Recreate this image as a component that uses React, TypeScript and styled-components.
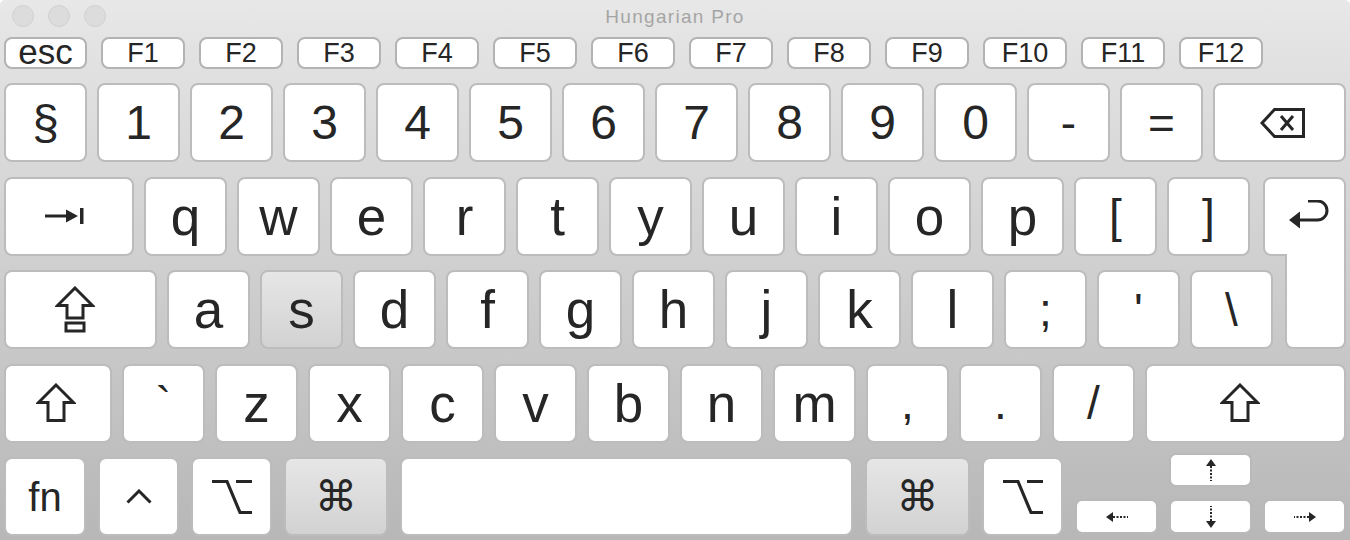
import styled, { createGlobalStyle } from "styled-components";

const INK = "#262626";
const EDGE = "#bcbcbc";

const GlobalStyle = createGlobalStyle`
  html, body {
    margin: 0;
    padding: 0;
    background: #ffffff;
  }
  body {
    font-family: "Liberation Sans", Arial, sans-serif;
  }
`;

const fnKeys = ["F1", "F2", "F3", "F4", "F5", "F6", "F7", "F8", "F9", "F10", "F11", "F12"];
const numberRow = ["1", "2", "3", "4", "5", "6", "7", "8", "9", "0", "-", "="];
const topRow = ["q", "w", "e", "r", "t", "y", "u", "i", "o", "p", "[", "]"];
const homeRow = ["a", "s", "d", "f", "g", "h", "j", "k", "l", ";", "'", "\\"];
const bottomRow = ["`", "z", "x", "c", "v", "b", "n", "m", ",", ".", "/"];

// letters render a bit larger than digits and symbols in the viewer
const labelSize = (c: string) => {
  if (/[a-z]/.test(c)) return 53;
  if (/[0-9§]/.test(c)) return 48;
  return 46;
};

const BackspaceIcon = () => (
  <svg width="46" height="32" viewBox="0 0 46 32" fill="none" stroke={INK} strokeWidth="3">
    <path d="M2 16 L14.5 2.5 H43.5 V29.5 H14.5 Z" />
    <path d="M21 9 L33 23 M33 9 L21 23" />
  </svg>
);

const TabIcon = () => (
  <svg width="40" height="18" viewBox="0 0 40 18">
    <path d="M0 9 H24" stroke={INK} strokeWidth="3" />
    <polygon points="21,2.5 33,9 21,15.5" fill={INK} />
    <rect x="35" y="1" width="3.5" height="16" fill={INK} />
  </svg>
);

const ReturnIcon = () => (
  <svg width="40" height="32" viewBox="0 0 40 32">
    <path d="M9 20 H28.5 A9.5 9.5 0 0 0 28.5 1 H19" fill="none" stroke={INK} strokeWidth="3" />
    <polygon points="0,20 11,11.5 11,28.5" fill={INK} />
  </svg>
);

const CapsIcon = () => (
  <svg width="40" height="48" viewBox="0 0 40 48" fill="none" stroke={INK} strokeWidth="3">
    <path d="M20 2 L37.5 19.5 H28 V32 H12 V19.5 H2.5 Z" />
    <rect x="11" y="37" width="18" height="8" />
  </svg>
);

const ShiftIcon = () => (
  <svg width="40" height="40" viewBox="0 0 40 40" fill="none" stroke={INK} strokeWidth="3">
    <path d="M20 2 L37.5 19.5 H28 V37.5 H12 V19.5 H2.5 Z" />
  </svg>
);

const ControlIcon = () => (
  <svg width="26" height="15" viewBox="0 0 26 15" fill="none" stroke={INK} strokeWidth="3">
    <polyline points="1.5,13.5 13,2 24.5,13.5" />
  </svg>
);

const OptionIcon = () => (
  <svg width="40" height="36" viewBox="0 0 40 36" fill="none" stroke={INK} strokeWidth="3.2">
    <path d="M0 2.5 H15 L28 33.5 H40 M24 2.5 H40" />
  </svg>
);

type Dir = "up" | "down" | "left" | "right";

const ArrowIcon = ({ dir }: { dir: Dir }) => {
  const turn = { up: 0, right: 90, down: 180, left: 270 }[dir];
  const vertical = dir === "up" || dir === "down";
  return (
    <svg
      width={vertical ? 12 : 24}
      height={vertical ? 24 : 12}
      viewBox={vertical ? "0 0 12 24" : "-6 6 24 12"}
    >
      <g transform={`rotate(${turn} 6 12)`}>
        <polygon points="6,1 1,8 11,8" fill={INK} />
        <path d="M6 8 V23" stroke={INK} strokeWidth="2" strokeDasharray="2 1.5" />
      </g>
    </svg>
  );
};

const App = () => {
  return (
    <>
      <GlobalStyle />
      <Window>
        <TitleBar>
          <Lights>
            <Light />
            <Light />
            <Light />
          </Lights>
          <Title>Hungarian Pro</Title>
        </TitleBar>

        <FnRow>
          <FnKey $w={83} $fs={35} $lift={4}>esc</FnKey>
          {fnKeys.map((k) => (
            <FnKey key={k}>{k}</FnKey>
          ))}
        </FnRow>

        <Board>
          <Row>
            <Key $fs={48}>§</Key>
            {numberRow.map((k) => (
              <Key key={k} $fs={labelSize(k)}>{k}</Key>
            ))}
            <Key $grow $shift={6}>
              <BackspaceIcon />
            </Key>
          </Row>

          <Row>
            <Key $w={130} $shift={-8}>
              <TabIcon />
            </Key>
            {topRow.map((k) => (
              <Key key={k} $fs={labelSize(k)}>{k}</Key>
            ))}
            <ReturnTop>
              <ReturnIcon />
            </ReturnTop>
          </Row>

          <Row>
            <Key $w={153} $shift={-12}>
              <CapsIcon />
            </Key>
            {homeRow.map((k) => (
              <Key key={k} $fs={labelSize(k)} $pressed={k === "s"}>{k}</Key>
            ))}
            <ReturnFoot />
          </Row>

          <Row>
            <Key $w={108} $shift={-4}>
              <ShiftIcon />
            </Key>
            {bottomRow.map((k) => (
              <Key key={k} $fs={labelSize(k)}>{k}</Key>
            ))}
            <Key $grow $shift={-12}>
              <ShiftIcon />
            </Key>
          </Row>

          <Row $gap={12}>
            <Key $w={82} $fs={40}>fn</Key>
            <Key $w={81}>
              <ControlIcon />
            </Key>
            <Key $w={81}>
              <OptionIcon />
            </Key>
            <Key $w={104} $pressed>
              <CommandGlyph>⌘</CommandGlyph>
            </Key>
            <Key $w={453} />
            <Key $w={105} $pressed>
              <CommandGlyph>⌘</CommandGlyph>
            </Key>
            <Key $w={81}>
              <OptionIcon />
            </Key>
            <ArrowCluster>
              <ArrowKey $col={2} $row={1}>
                <ArrowIcon dir="up" />
              </ArrowKey>
              <ArrowKey $col={1} $row={2}>
                <ArrowIcon dir="left" />
              </ArrowKey>
              <ArrowKey $col={2} $row={2}>
                <ArrowIcon dir="down" />
              </ArrowKey>
              <ArrowKey $col={3} $row={2}>
                <ArrowIcon dir="right" />
              </ArrowKey>
            </ArrowCluster>
          </Row>
        </Board>
      </Window>
    </>
  );
};

export default App;

const Window = styled.div`
  width: 1350px;
  height: 540px;
  box-sizing: border-box;
  border-radius: 5px 5px 0 0;
  overflow: hidden;
  display: flex;
  flex-direction: column;
  background: linear-gradient(to bottom, #e8e8e8 0%, #e3e3e3 8%, #b7b7b7 100%);
`;

const TitleBar = styled.div`
  height: 31px;
  display: grid;
  grid-template-columns: 1fr auto 1fr;
  align-items: center;
`;

const Lights = styled.div`
  display: flex;
  gap: 14px;
  padding-left: 12px;
`;

const Light = styled.div`
  width: 22px;
  height: 22px;
  box-sizing: border-box;
  border-radius: 50%;
  background: #dcdcdc;
  border: 1px solid #d0d0d0;
`;

const Title = styled.div`
  font-size: 19px;
  letter-spacing: 1.3px;
  color: #a5a5a5;
  padding-top: 2px;
`;

const FnRow = styled.div`
  display: flex;
  gap: 14px;
  padding: 0 4px;
  margin-top: 6px;
`;

const FnKey = styled.div<{ $w?: number; $fs?: number; $lift?: number }>`
  box-sizing: border-box;
  width: ${({ $w }) => $w ?? 84}px;
  height: 32px;
  border: 2px solid #b3b3b3;
  border-radius: 8px;
  background: #ffffff;
  display: flex;
  align-items: center;
  justify-content: center;
  font-size: ${({ $fs }) => $fs ?? 27}px;
  line-height: 1;
  color: ${INK};
  padding-bottom: ${({ $lift }) => $lift ?? 0}px;
`;

const Board = styled.div`
  margin-top: 14px;
  display: flex;
  flex-direction: column;
  gap: 14.5px;
`;

const Row = styled.div<{ $gap?: number }>`
  display: flex;
  gap: ${({ $gap }) => $gap ?? 10}px;
  padding: 0 4px;
`;

type keyProps = {
  $w?: number;
  $grow?: boolean;
  $pressed?: boolean;
  $fs?: number;
  $shift?: number;
};

const Key = styled.div<keyProps>`
  box-sizing: border-box;
  height: 79px;
  width: ${({ $grow, $w }) => ($grow ? "auto" : `${$w ?? 83}px`)};
  flex: ${({ $grow }) => ($grow ? "1 1 auto" : "0 0 auto")};
  border: 2px solid ${EDGE};
  border-radius: 8px;
  background: ${({ $pressed }) =>
    $pressed ? "linear-gradient(to bottom, #e6e6e6, #d2d2d2)" : "#ffffff"};
  display: flex;
  align-items: center;
  justify-content: center;
  padding-left: ${({ $shift }) => Math.max($shift ?? 0, 0)}px;
  padding-right: ${({ $shift }) => Math.max(-($shift ?? 0), 0)}px;
  font-size: ${({ $fs }) => $fs ?? 48}px;
  line-height: 1;
  color: ${INK};
`;

/* the return key is L-shaped: a full-width cap in the top row and a
   narrower foot in the home row that reaches up through the row gap */
const ReturnTop = styled.div`
  box-sizing: border-box;
  flex: 0 0 83px;
  height: 79px;
  margin-left: auto;
  border: 2px solid ${EDGE};
  border-radius: 8px 8px 0 8px;
  background: #ffffff;
  display: flex;
  align-items: center;
  justify-content: center;
  padding-left: 8px;
`;

const ReturnFoot = styled.div`
  box-sizing: border-box;
  flex: 0 0 61px;
  height: 95.5px;
  margin-top: -16.5px;
  margin-left: auto;
  border: 2px solid ${EDGE};
  border-top: none;
  border-radius: 0 0 8px 8px;
  background: #ffffff;
`;

const CommandGlyph = styled.span`
  font-family: "DejaVu Sans", sans-serif;
  font-size: 42px;
  line-height: 1;
  color: ${INK};
`;

const ArrowCluster = styled.div`
  flex: 1;
  align-self: flex-start;
  margin-top: -4px;
  display: grid;
  grid-template-columns: repeat(3, 1fr);
  grid-template-rows: 34px 35px;
  column-gap: 11px;
  row-gap: 12px;
`;

const ArrowKey = styled.div<{ $col: number; $row: number }>`
  grid-column: ${({ $col }) => $col};
  grid-row: ${({ $row }) => $row};
  box-sizing: border-box;
  border: 2px solid #b9b9b9;
  border-radius: 7px;
  background: #ffffff;
  display: flex;
  align-items: center;
  justify-content: center;
`;
